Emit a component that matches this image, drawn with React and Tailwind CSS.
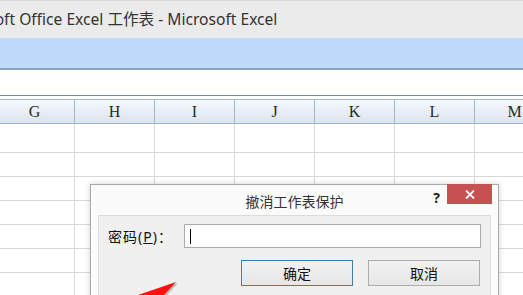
const cols = ["G", "H", "I", "J", "K", "L", "M"];
const rowHeights = ["h-[29px]", "h-[24px]", "h-[24px]", "h-[24px]", "h-[24px]", "h-[24px]", "h-[24px]"];

export default function App() {
  return (
    <div
      className="relative w-[523px] h-[295px] overflow-hidden bg-white"
      style={{ fontFamily: '"Noto Sans", "Noto Sans CJK SC", sans-serif' }}
    >
      {/* window title */}
      <div className="h-[38px] bg-[#ebebeb] border-t border-[#d8d8d8] flex items-center overflow-hidden whitespace-nowrap">
        <span className="-ml-[54px] text-[15.6px] text-[#333]">
          Microsoft Office Excel 工作表 - Microsoft Excel
        </span>
      </div>
      {/* ribbon strip */}
      <div className="h-[30px] bg-[#bfdbfb]" />
      {/* formula bar */}
      <div className="h-[28px] bg-white border-t-2 border-b border-t-[#8da3b9] border-b-[#6f8ea2]" />
      <div className="h-[3px] bg-white" />

      {/* sheet */}
      <div className="-ml-[5px]">
        <div className="flex h-[25px] border-y border-[#9eb6ce] bg-gradient-to-b from-[#f7f9fc] to-[#dbe4ef]">
          {cols.map((c) => (
            <div
              key={c}
              className="w-[80px] shrink-0 border-r border-[#9eb6ce] flex items-center justify-center text-[16px] text-[#2a2a2a]"
              style={{ fontFamily: '"Liberation Serif", serif' }}
            >
              {c}
            </div>
          ))}
        </div>
        {rowHeights.map((h, i) => (
          <div key={i} className={`flex ${h}`}>
            {cols.map((c) => (
              <div key={c} className="w-[80px] shrink-0 border-r border-b border-[#d5d9de]" />
            ))}
          </div>
        ))}
      </div>

      {/* dialog */}
      <div className="absolute left-[90px] top-[184px] w-[409px] h-[140px] bg-[#fbfbfb] border border-[#a9a9a9] shadow-[0_0_6px_rgba(0,0,0,0.18)]">
        <div className="relative h-[30px] flex items-center justify-center">
          <span className="text-[14px] text-[#333] pt-[2px]">撤消工作表保护</span>
          <span className="absolute right-[58px] top-[2px] text-[14px] font-bold text-[#222]">?</span>
          <div className="absolute -top-px right-[6px] w-[45px] h-[20px] bg-[#c75050] flex items-center justify-center">
            <svg width="10" height="9" viewBox="0 0 10 9">
              <path d="M1 0.5 L9 8.5 M9 0.5 L1 8.5" stroke="#fff" strokeWidth="1.8" />
            </svg>
          </div>
        </div>
        <div className="mx-[7px] h-[120px] bg-[#f0f0f0] border border-[#dcdcdc] px-[9px] pt-[8px]">
          <div className="flex items-center">
            <span className="w-[76px] text-[14px] text-[#111] tracking-[1px]">
              密码(<span className="underline">P</span>)：
            </span>
            <div className="flex-1 h-[24px] bg-white border border-[#ababab] flex items-center pl-[5px]">
              <div className="w-px h-[15px] bg-black" />
            </div>
          </div>
          <div className="mt-[12px] flex justify-end gap-[15px] pr-px">
            <button className="w-[112px] h-[26px] border border-[#3c7fb1] bg-gradient-to-b from-[#f2f2f2] to-[#e6e6e6] text-[14px] text-[#111]">
              确定
            </button>
            <button className="w-[112px] h-[26px] border border-[#acacac] bg-gradient-to-b from-[#f2f2f2] to-[#e6e6e6] text-[14px] text-[#111]">
              取消
            </button>
          </div>
        </div>
      </div>

      {/* red arrow */}
      <svg className="absolute left-[134px] top-[278px]" width="50" height="17" viewBox="0 0 50 17">
        <polygon points="42,4 5,17 30,17" fill="rgba(0,0,0,0.25)" transform="translate(2,1)" />
        <polygon points="42,4 4,17 30,17" fill="#ff1010" />
      </svg>
    </div>
  );
}
